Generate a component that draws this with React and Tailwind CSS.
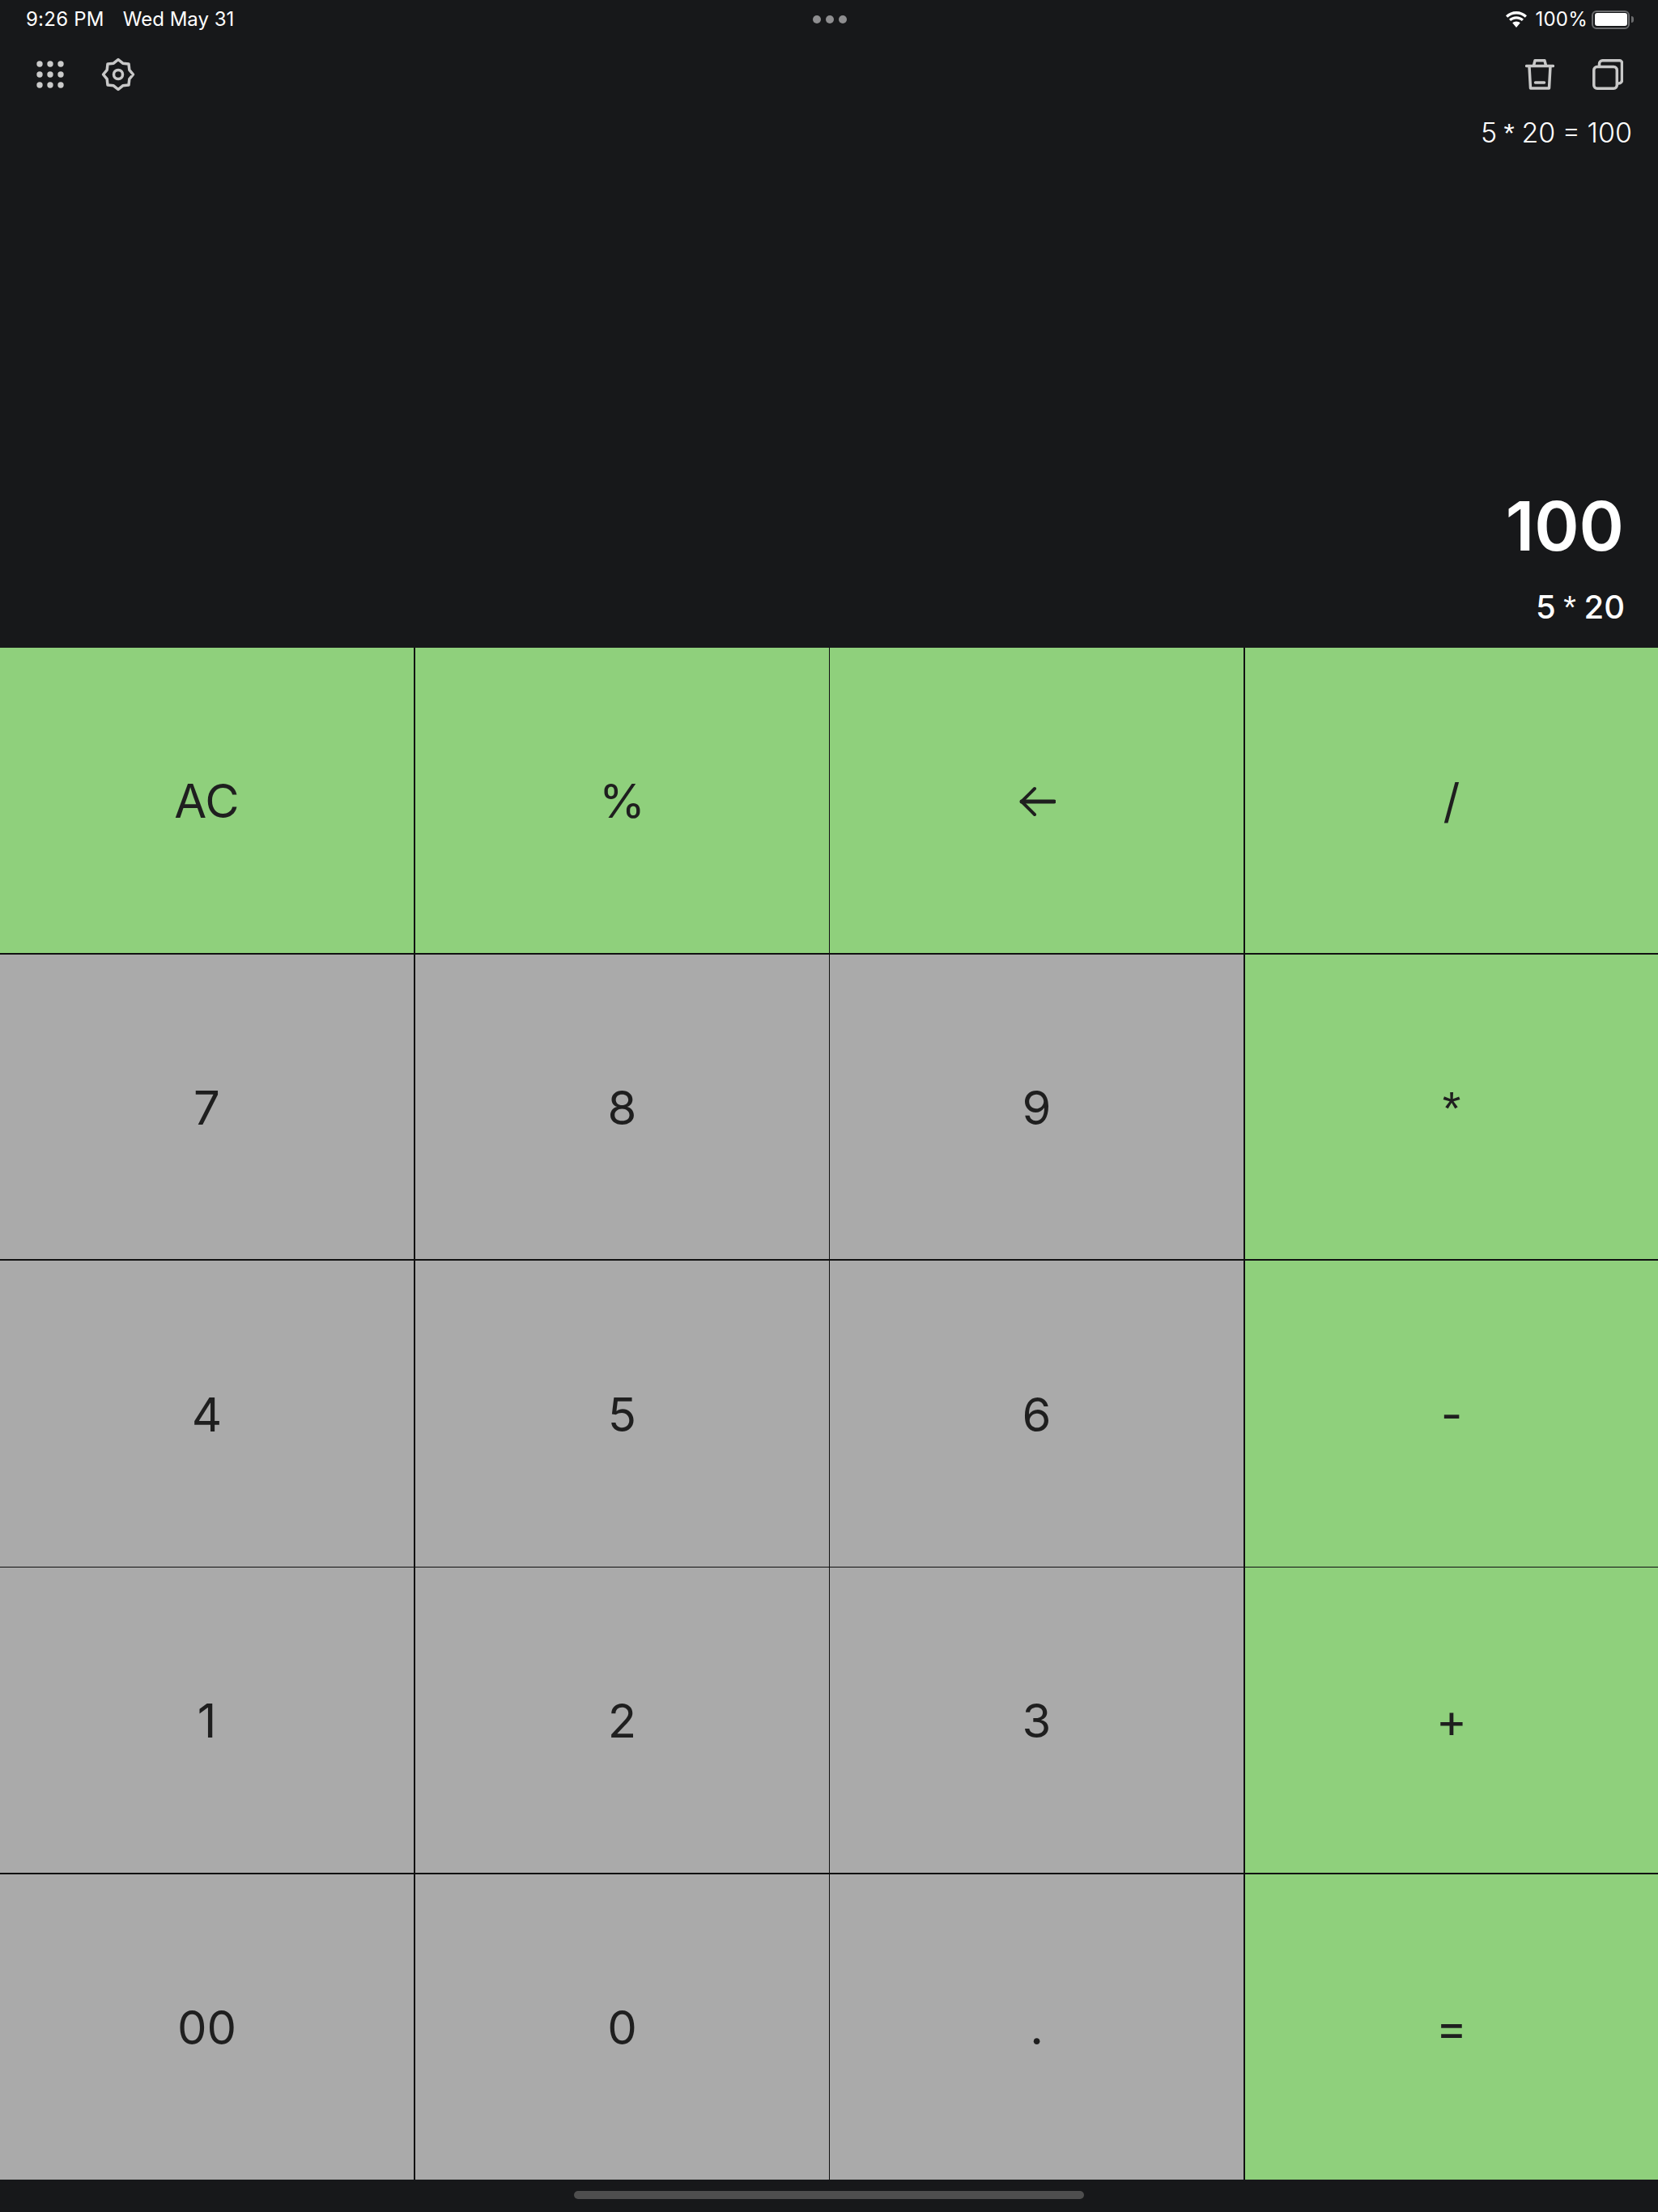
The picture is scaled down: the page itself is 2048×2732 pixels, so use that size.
const keys = [
  { label: "AC", op: true },
  { label: "%", op: true },
  { label: "back", op: true },
  { label: "/", op: true },
  { label: "7" },
  { label: "8" },
  { label: "9" },
  { label: "*", op: true },
  { label: "4" },
  { label: "5" },
  { label: "6" },
  { label: "-", op: true },
  { label: "1" },
  { label: "2" },
  { label: "3" },
  { label: "+", op: true },
  { label: "00" },
  { label: "0" },
  { label: "." },
  { label: "=", op: true },
];

// the divider lines are not all the same thickness in the picture
const colBorders = ["border-r-2", "border-r", "border-r-2", ""];
const rowBorders = ["border-b-2", "border-b-2", "border-b", "border-b-2", ""];

const DotsIcon = () => (
  <svg width="34" height="34" viewBox="0 0 34 34" fill="#cbcbcb">
    {[4, 17, 30].map((y) =>
      [4, 17, 30].map((x) => <circle key={x + "-" + y} cx={x} cy={y} r="3.7" />)
    )}
  </svg>
);

const GearIcon = () => (
  <svg width="42" height="42" viewBox="0 0 42 42" fill="none" stroke="#c8c8c8" strokeWidth="3.500" strokeLinejoin="round">
    <path d="M21 2.500L26.700 7.200L34 8L34.800 15.300L39.500 21L34.800 26.700L34 34L26.700 34.800L21 39.500L15.300 34.800L8 34L7.200 26.700L2.500 21L7.200 15.300L8 8L15.300 7.200Z" />
    <circle cx="21" cy="21" r="5.500" />
  </svg>
);

const TrashIcon = () => (
  <svg width="36" height="38" viewBox="0 0 36 38" fill="none" stroke="#c8c8c8" strokeWidth="3.500" strokeLinejoin="round">
    <path d="M1.500 8.500h33" strokeLinecap="round" />
    <path d="M10.500 8l1.500-6.200h12L25.500 8" />
    <path d="M5 9l1.500 27h23L31 9" />
    <path d="M12.500 29h11" strokeLinecap="round" />
  </svg>
);

const CopyIcon = () => (
  <svg width="38" height="38" viewBox="0 0 38 38" fill="none" stroke="#c8c8c8" strokeWidth="3.500">
    <rect x="1.800" y="9.500" width="28.500" height="26.700" rx="4" />
    <path d="M8.500 9V5.800a4 4 0 0 1 4-4h21a3 3 0 0 1 3 3V26a4 4 0 0 1-4 4H30" />
  </svg>
);

const BackIcon = () => (
  <svg width="46" height="38" viewBox="0 0 46 38" fill="none" stroke="#1f1f1f" strokeLinecap="round" strokeLinejoin="round">
    <path d="M4 19h40" strokeWidth="5" />
    <path d="M20 3L4 19L20 35" strokeWidth="4" />
  </svg>
);

const WifiIcon = () => (
  <svg width="28" height="20" viewBox="0 0 28 20" fill="white">
    <path d="M14 3.500c4.200 0 7.800 1.500 10.800 4.200l2.200-2.400C23.400 2 19 0 14 0S4.600 2 1 5.300l2.200 2.400C6.200 5 9.800 3.500 14 3.500z" />
    <path d="M14 9.500c2.700 0 5 1 6.800 2.600l2.200-2.400C20.600 7.500 17.500 6.200 14 6.200S7.400 7.500 5 9.700l2.200 2.400C9 10.500 11.300 9.500 14 9.500z" />
    <path d="M14 12.500c-1.900 0-3.500.7-4.800 1.800L14 20l4.800-5.700c-1.300-1.100-2.900-1.800-4.800-1.800z" />
  </svg>
);

const BatteryIcon = () => (
  <div className="flex items-center gap-[2px]">
    <div className="w-[47px] h-[23px] rounded-[6px] border-2 border-[#6b6c6e] p-[1.500px]">
      <div className="w-full h-full rounded-[3px] bg-white" />
    </div>
    <div className="w-[3px] h-[8px] rounded-r-full bg-[#6b6c6e]" />
  </div>
);

const Star = () => <span className="font-['Liberation_Sans',sans-serif]">*</span>;

const App = () => {
  return (
    <div className="w-[2048px] h-[2732px] flex flex-col bg-[#17181a] font-['Inter',sans-serif] overflow-hidden">
      {/* status bar */}
      <div className="h-[48px] shrink-0 flex items-center justify-between pl-[32px] pr-[30px] text-white text-[24px] leading-none">
        <div className="flex gap-[23px] w-[400px]">
          <span className="tracking-[0.01em]">9:26 PM</span>
          <span>Wed May 31</span>
        </div>
        <div className="flex gap-[6px]">
          <div className="w-[10px] h-[10px] rounded-full bg-[#8e8e90]" />
          <div className="w-[10px] h-[10px] rounded-full bg-[#8e8e90]" />
          <div className="w-[10px] h-[10px] rounded-full bg-[#8e8e90]" />
        </div>
        <div className="flex items-center justify-end gap-[5px] w-[400px]">
          <div className="mr-[4px] flex">
            <WifiIcon />
          </div>
          <span className="tracking-[0.01em]">100%</span>
          <BatteryIcon />
        </div>
      </div>

      {/* toolbar */}
      <div className="h-[88px] shrink-0 flex items-center justify-between pl-[45px] pr-[43px]">
        <div className="flex items-center gap-[46px]">
          <DotsIcon />
          <GearIcon />
        </div>
        <div className="flex items-center gap-[47px]">
          <TrashIcon />
          <CopyIcon />
        </div>
      </div>

      {/* history */}
      <div className="pr-[32px] text-right text-white text-[34px] font-light leading-[56px] [word-spacing:-1px]">
        5 <Star /> 20 = 100
      </div>

      {/* display */}
      <div className="flex-1 flex flex-col justify-end items-end pr-[42px] pb-[26px] text-white">
        <div className="text-[84px] font-semibold leading-[100px]">100</div>
        <div className="mt-[26px] mr-[-1px] text-[40px] font-medium leading-[48px] [word-spacing:-1px]">
          5 <Star /> 20
        </div>
      </div>

      {/* keypad */}
      <div className="grid grid-cols-[513px_512px_513px_510px] grid-rows-[379px_378px_379px_379px_377px] shrink-0">
        {keys.map((k, i) => (
          <div
            key={k.label}
            className={
              "flex items-center justify-center pt-[2px] border-[#111] text-[#1f1f1f] text-[58px] " +
              colBorders[i % 4] +
              " " +
              rowBorders[Math.floor(i / 4)] +
              " " +
              (k.op ? "bg-[#8fd07c]" : "bg-[#aaaaaa]")
            }
          >
            {k.label === "back" ? <BackIcon /> : k.label === "*" ? <Star /> : k.label}
          </div>
        ))}
      </div>

      {/* home bar */}
      <div className="h-[40px] shrink-0 flex items-start justify-center pt-[14px]">
        <div className="w-[630px] h-[10px] rounded-full bg-[#4e4e4e]" />
      </div>
    </div>
  );
};

export default App;
